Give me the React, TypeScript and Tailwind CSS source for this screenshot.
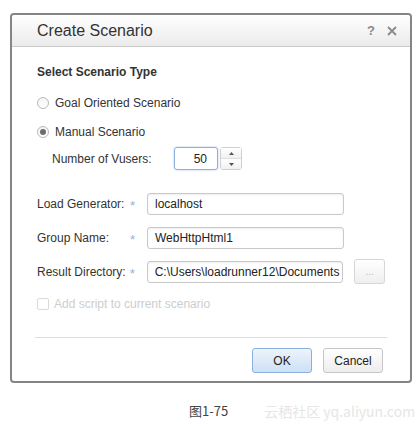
import { ReactNode } from 'react';

const font = { fontFamily: '"Liberation Sans", Arial, sans-serif' };

function Radio({ checked }: { checked?: boolean }) {
  return (
    <span className="w-[12px] h-[12px] rounded-full border border-[#b9b9b9] bg-gradient-to-b from-[#f4f4f4] to-white flex items-center justify-center">
      {checked && <span className="w-[6px] h-[6px] rounded-full bg-[#6d6d6d]" />}
    </span>
  );
}

function Field({ label, value, action }: { label: string; value: string; action?: ReactNode }) {
  return (
    <div className="flex items-center h-[23px]">
      <span className="w-[93px] text-[12px] text-[#333]">{label}</span>
      <span className="w-[17px] text-[13px] text-[#8fb3de] leading-none pt-[3px]">*</span>
      <div className="w-[197px] h-[22px] border border-[#c9c9c9] rounded-[3px] shadow-[inset_0_1px_2px_rgba(0,0,0,0.08)] px-[7px] flex items-center text-[12px] text-[#222] overflow-hidden whitespace-nowrap">
        {value}
      </div>
      {action}
    </div>
  );
}

export default function App() {
  return (
    <div className="w-[419px] h-[426px] bg-white pt-[13px] pl-[10px]" style={font}>
      {/* 对话框 */}
      <div className="w-[402px] h-[370px] border-2 border-[#858585] rounded-[4px] flex flex-col">
        <div className="h-[32px] bg-gradient-to-b from-white to-[#ebebeb] border-b border-[#cacaca] pl-[25px] pr-[13px] flex items-center justify-between rounded-t-[3px]">
          <span className="text-[16px] text-[#333]">Create Scenario</span>
          <div className="flex items-center gap-[12px] text-[#8a8a8a]">
            <span className="text-[13px] font-bold">?</span>
            <svg width="10" height="10" viewBox="0 0 10 10">
              <path d="M1 1 L9 9 M9 1 L1 9" stroke="#8a8a8a" strokeWidth="1.8" />
            </svg>
          </div>
        </div>

        <div className="flex flex-col pl-[25px] pr-[25px]">
          <div className="mt-[17px] h-[16px] flex items-center text-[12px] font-bold text-[#333]">
            Select Scenario Type
          </div>

          <div className="mt-[15px] h-[16px] flex items-center gap-[6px] text-[12px] text-[#333]">
            <Radio />
            <span>Goal Oriented Scenario</span>
          </div>

          <div className="mt-[13px] h-[16px] flex items-center gap-[6px] text-[12px] text-[#333]">
            <Radio checked />
            <span>Manual Scenario</span>
          </div>

          <div className="mt-[7px] h-[23px] flex items-center pl-[15px] text-[12px] text-[#333]">
            <span className="w-[122px]">Number of Vusers:</span>
            <div className="w-[44px] h-[23px] border border-[#8eaedb] rounded-[3px] shadow-[0_0_2px_rgba(100,150,220,0.6)] flex items-center justify-end pr-[10px] text-[12px] text-[#222]">
              50
            </div>
            <div className="ml-[2px] w-[22px] h-[23px] border border-[#cfcfcf] rounded-[3px] flex flex-col">
              <div className="flex-1 flex items-center justify-center border-b border-[#dedede] bg-gradient-to-b from-white to-[#f1f1f1]">
                <svg width="5" height="3" viewBox="0 0 5 3"><path d="M0 3 L2.5 0 L5 3 Z" fill="#555" /></svg>
              </div>
              <div className="flex-1 flex items-center justify-center bg-gradient-to-b from-white to-[#f1f1f1]">
                <svg width="5" height="3" viewBox="0 0 5 3"><path d="M0 0 L5 0 L2.5 3 Z" fill="#555" /></svg>
              </div>
            </div>
          </div>

          <div className="mt-[22px]">
            <Field label="Load Generator:" value="localhost" />
          </div>
          <div className="mt-[11px]">
            <Field label="Group Name:" value="WebHttpHtml1" />
          </div>
          <div className="mt-[11px]">
            <Field
              label="Result Directory:"
              value="C:\Users\loadrunner12\Documents"
              action={
                <div className="ml-[11px] w-[31px] h-[25px] border border-[#d6d6d6] rounded-[3px] bg-gradient-to-b from-white to-[#efefef] flex items-end justify-center pb-[6px] text-[10px] leading-none text-[#b5b5b5]">
                  ...
                </div>
              }
            />
          </div>

          <div className="mt-[14px] h-[14px] flex items-center gap-[5px] text-[12px] text-[#cdcdcd]">
            <span className="w-[12px] h-[12px] border border-[#dadada] rounded-[2px]" />
            <span>Add script to current scenario</span>
          </div>

          <div className="mt-[26px] h-px bg-[#dcdcdc] -mx-[2px]" />

          <div className="mt-[10px] flex justify-end gap-[11px] pr-[2px]">
            <button className="w-[60px] h-[25px] border border-[#8cafdb] rounded-[3px] bg-gradient-to-b from-[#edf4fc] to-[#cde0f5] text-[12px] text-[#222]">
              OK
            </button>
            <button className="w-[60px] h-[25px] border border-[#c6c6c6] rounded-[3px] bg-gradient-to-b from-white to-[#ededed] text-[12px] text-[#222]">
              Cancel
            </button>
          </div>
        </div>
      </div>

      {/* 图注 */}
      <div className="flex items-center mt-[19px] h-[18px] pl-[179px]" style={{ fontFamily: '"Noto Sans CJK SC", "Liberation Sans", sans-serif' }}>
        <span className="text-[13px] text-[#444]">图1-75</span>
        <span className="ml-[36px] text-[14px] text-[#e6e6e6]">云栖社区 yq.aliyun.com</span>
      </div>
    </div>
  );
}
